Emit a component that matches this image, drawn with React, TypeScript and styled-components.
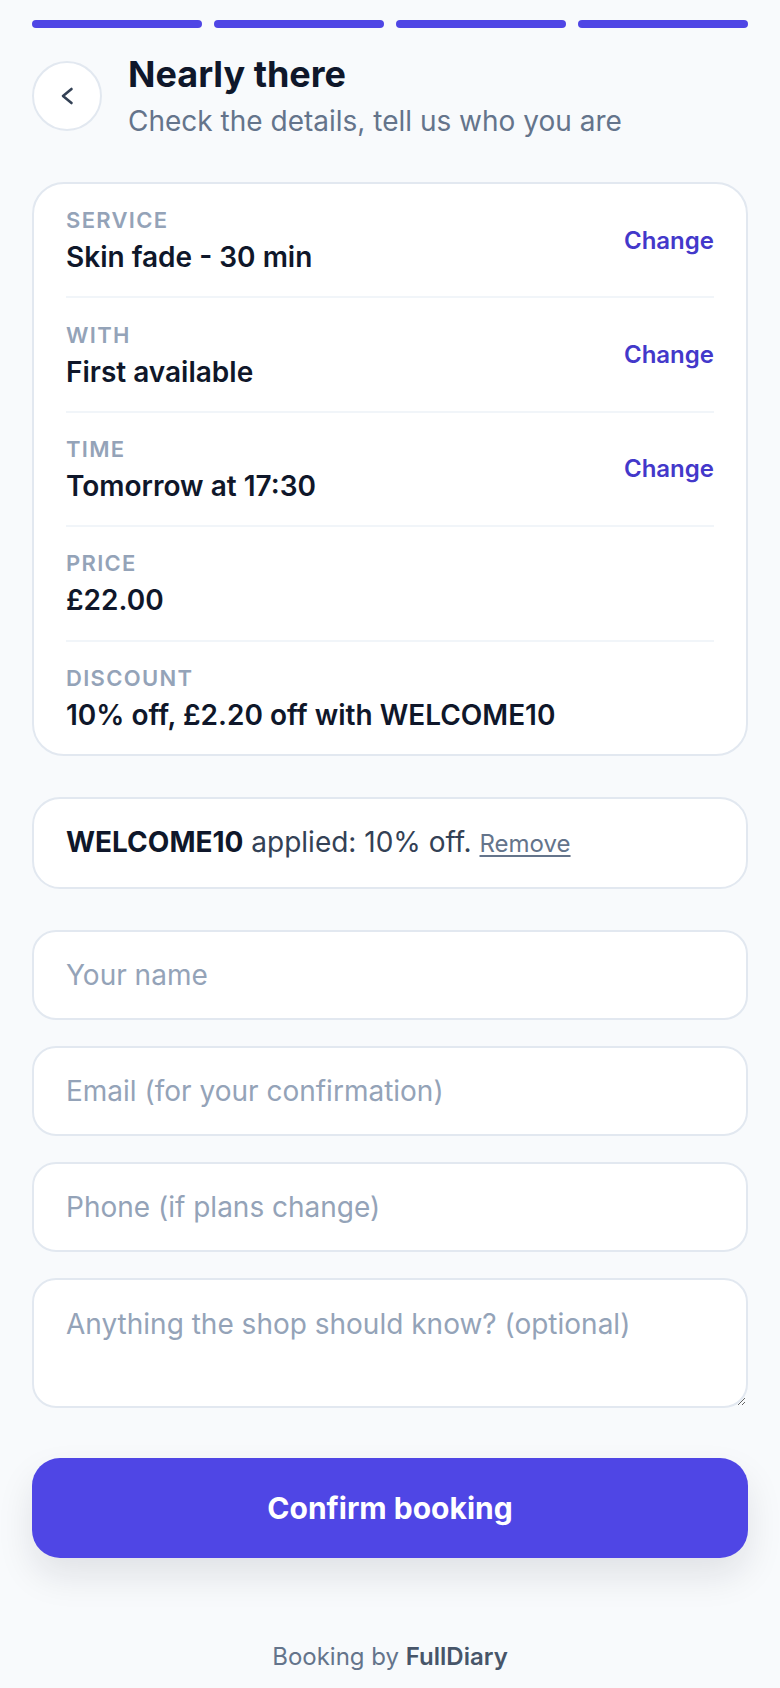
import React from 'react'
import styled, { createGlobalStyle } from 'styled-components'

const GlobalStyle = createGlobalStyle`
  * { box-sizing: border-box; }
  body {
    margin: 0;
    background: #f8fafc;
    font-family: Inter, "Noto Sans", "Liberation Sans", sans-serif;
    color: #0f172a;
  }
`

const Page = styled.div`
  min-height: 1688px;
  padding: 20px 32px 0;
  display: flex;
  flex-direction: column;
`

const Progress = styled.div`
  display: grid;
  grid-template-columns: repeat(4, 1fr);
  gap: 12px;
`

const Step = styled.div<{ $done?: boolean }>`
  height: 8px;
  border-radius: 4px;
  background: ${p => (p.$done ? '#4f46e5' : '#e2e8f0')};
`

const Header = styled.header`
  display: flex;
  align-items: center;
  gap: 26px;
  margin: 24px 0 43px;
`

const BackButton = styled.button`
  flex: none;
  width: 70px;
  height: 70px;
  border-radius: 50%;
  border: 2px solid #e2e8f0;
  background: #fff;
  display: flex;
  align-items: center;
  justify-content: center;
  padding: 0;
  color: #334155;
  cursor: pointer;
`

const Titles = styled.div`
  display: flex;
  flex-direction: column;
  gap: 7px;
`

const Title = styled.h1`
  margin: 0;
  font-size: 36px;
  line-height: 44px;
  font-weight: 700;
  color: #0f172a;
`

const Subtitle = styled.p`
  margin: 0;
  font-size: 28px;
  line-height: 36px;
  color: #64748b;
`

const Card = styled.section`
  background: #fff;
  border: 2px solid #e2e8f0;
  border-radius: 32px;
`

const Row = styled.div`
  margin: 0 32px;
  padding: 22.2px 0;
  display: flex;
  align-items: center;
  justify-content: space-between;
  border-bottom: 2px solid #f1f5f9;

  &:last-child {
    border-bottom: none;
  }
`

const RowText = styled.div`
  display: flex;
  flex-direction: column;
  gap: 6px;
`

const Label = styled.span`
  font-size: 22px;
  line-height: 28px;
  font-weight: 600;
  letter-spacing: 0.06em;
  text-transform: uppercase;
  color: #94a3b8;
`

const Value = styled.span`
  font-size: 28px;
  line-height: 34px;
  font-weight: 600;
  color: #0f172a;
`

const ChangeLink = styled.a`
  font-size: 24px;
  font-weight: 600;
  color: #4338ca;
  text-decoration: none;
  cursor: pointer;
`

const Coupon = styled.div`
  margin-top: 41px;
  background: #fff;
  border: 2px solid #e2e8f0;
  border-radius: 28px;
  padding: 26px 32px;
  font-size: 28px;
  line-height: 35px;
  color: #334155;
`

const Code = styled.strong`
  font-weight: 700;
  color: #0f172a;
`

const Remove = styled.a`
  font-size: 24px;
  color: #64748b;
  text-decoration: underline;
  text-underline-offset: 3px;
  cursor: pointer;
`

const Form = styled.form`
  margin-top: 41px;
  display: flex;
  flex-direction: column;
  gap: 26px;
`

const fieldBase = `
  width: 100%;
  background: #fff;
  border: 2px solid #e2e8f0;
  border-radius: 24px;
  padding: 0 32px;
  font-family: Inter, "Noto Sans", "Liberation Sans", sans-serif;
  font-size: 28px;
  color: #0f172a;
  outline: none;

  &::placeholder {
    color: #94a3b8;
  }
`

const Input = styled.input`
  ${fieldBase}
  height: 90px;
`

const TextArea = styled.textarea`
  ${fieldBase}
  height: 130px;
  padding-top: 26px;
  line-height: 36px;
  resize: vertical;
`

const Submit = styled.button`
  margin-top: 24px;
  height: 100px;
  border: none;
  border-radius: 28px;
  background: #4f46e5;
  color: #fff;
  font-family: Inter, "Noto Sans", "Liberation Sans", sans-serif;
  font-size: 30px;
  font-weight: 700;
  box-shadow: 0 18px 36px rgba(15, 23, 42, 0.1);
  cursor: pointer;
`

const Footer = styled.footer`
  margin-top: 83px;
  text-align: center;
  font-size: 24px;
  line-height: 32px;
  color: #64748b;

  b {
    font-weight: 600;
    color: #475569;
  }
`

const ChevronLeft = () => (
  <svg width="14" height="18" viewBox="0 0 14 18" fill="none">
    <path d="M11.5 2 L3 9 L11.5 16" stroke="currentColor" strokeWidth="2.6" strokeLinecap="round" strokeLinejoin="round" />
  </svg>
)

const details = [
  { label: 'Service', value: 'Skin fade - 30 min', change: true },
  { label: 'With', value: 'First available', change: true },
  { label: 'Time', value: 'Tomorrow at 17:30', change: true },
  { label: 'Price', value: '£22.00', change: false },
  { label: 'Discount', value: '10% off, £2.20 off with WELCOME10', change: false },
]

export default function App() {
  return (
    <Page>
      <GlobalStyle />
      <Progress>
        {[0, 1, 2, 3].map(i => <Step key={i} $done />)}
      </Progress>

      <Header>
        <BackButton aria-label="Back">
          <ChevronLeft />
        </BackButton>
        <Titles>
          <Title>Nearly there</Title>
          <Subtitle>Check the details, tell us who you are</Subtitle>
        </Titles>
      </Header>

      <Card>
        {details.map(d => (
          <Row key={d.label}>
            <RowText>
              <Label>{d.label}</Label>
              <Value>{d.value}</Value>
            </RowText>
            {d.change && <ChangeLink>Change</ChangeLink>}
          </Row>
        ))}
      </Card>

      <Coupon>
        <Code>WELCOME10</Code> applied: 10% off. <Remove>Remove</Remove>
      </Coupon>

      <Form onSubmit={e => e.preventDefault()}>
        <Input type="text" placeholder="Your name" />
        <Input type="email" placeholder="Email (for your confirmation)" />
        <Input type="tel" placeholder="Phone (if plans change)" />
        <TextArea placeholder="Anything the shop should know? (optional)" />
        <Submit type="submit">Confirm booking</Submit>
      </Form>

      <Footer>
        Booking by <b>FullDiary</b>
      </Footer>
    </Page>
  )
}
